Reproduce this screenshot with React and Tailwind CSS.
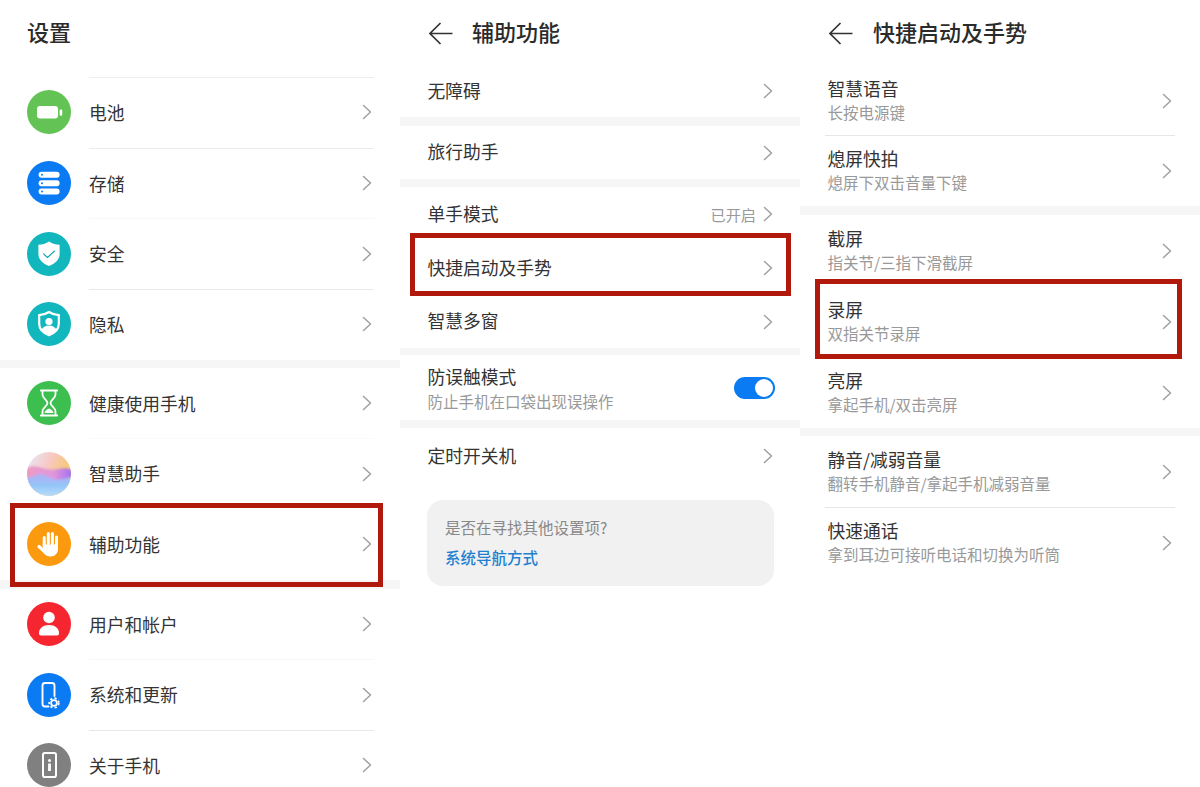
import React from 'react'

function Chevron() {
  return (
    <svg width="10" height="16" viewBox="0 0 10 16" fill="none" className="shrink-0">
      <path d="M1.5 1.5 8.5 8 1.5 14.5" stroke="#a0a0a0" strokeWidth="1.5" strokeLinecap="round" strokeLinejoin="round" />
    </svg>
  )
}

function BackArrow() {
  return (
    <svg width="24" height="23" viewBox="0 0 24 23" fill="none" className="shrink-0">
      <path d="M23.5 11.5H1.5M11.5 1 1 11.5 11.5 22" stroke="#333333" strokeWidth="1.7" />
    </svg>
  )
}

function Circle({ color, children }) {
  return (
    <svg width="44" height="44" viewBox="0 0 44 44" fill="none" className="shrink-0">
      <circle cx="22" cy="22" r="22" fill={color} />
      {children}
    </svg>
  )
}

const BatteryIcon = () => (
  <Circle color="#63c354">
    <rect x="10" y="16" width="21" height="12.6" rx="3" fill="#fff" />
    <rect x="32.6" y="19.4" width="2.6" height="6.4" rx="1" fill="#fff" />
  </Circle>
)

const StorageIcon = () => (
  <Circle color="#0a7bf3">
    <rect x="11.6" y="10.8" width="21" height="6" rx="3" fill="#fff" />
    <rect x="11.6" y="19.2" width="21" height="6" rx="3" fill="#fff" />
    <rect x="11.6" y="27.6" width="21" height="6" rx="3" fill="#fff" />
    <circle cx="15" cy="13.8" r="1" fill="#0a7bf3" />
    <circle cx="15" cy="22.2" r="1" fill="#0a7bf3" />
    <circle cx="15" cy="30.6" r="1" fill="#0a7bf3" />
  </Circle>
)

const SecurityIcon = () => (
  <Circle color="#12b6bd">
    <path d="M22 9.400c2.600 1.800 6 3 10.600 3.400v9.200c0 5.600-4.400 9.600-10.600 12-6.200-2.400-10.600-6.400-10.600-12v-9.200C16 12.400 19.400 11.200 22 9.400Z" fill="#fff" />
    <path d="M16.500 21.800l4 3.700 7-6.500" stroke="#12a5ac" strokeWidth="1.100" strokeLinecap="round" strokeLinejoin="round" />
  </Circle>
)

const PrivacyIcon = () => (
  <Circle color="#12b6bd">
    <path d="M22 10c2.600 1.700 5.800 2.800 9.800 3.200v8.600c0 5.400-4 9.200-9.800 11.400-5.800-2.200-9.800-6-9.800-11.400v-8.600C16.200 12.800 19.400 11.700 22 10Z" stroke="#fff" strokeWidth="2.200" />
    <circle cx="22" cy="19.500" r="3.600" fill="#fff" />
    <path d="M14.500 28c1.200-3 4-4.500 7.500-4.500s6.300 1.500 7.500 4.500c-2 2.500-4.500 4-7.500 5.200-3-1.200-5.500-2.700-7.500-5.200Z" fill="#fff" />
  </Circle>
)

const HourglassIcon = () => (
  <Circle color="#3dbf4f">
    <path d="M14 9.500h16M14 34.500h16" stroke="#fff" strokeWidth="2.200" strokeLinecap="round" />
    <path d="M15.500 9.500v4c0 4 5 5.500 5 8.500s-5 4.500-5 8.500v4M28.500 9.500v4c0 4-5 5.500-5 8.500s5 4.500 5 8.500v4" stroke="#fff" strokeWidth="1.800" />
    <path d="M17.500 32c0-2 2.500-3.500 4.500-4.500 2 1 4.500 2.500 4.500 4.500Z" fill="#fff" />
  </Circle>
)

const AssistantIcon = () => (
  <svg width="44" height="44" viewBox="0 0 44 44" fill="none" className="shrink-0">
    <defs>
      <linearGradient id="assistTop" x1="0.100" y1="0.100" x2="0.850" y2="0.450">
        <stop offset="0" stopColor="#e9e3f0" />
        <stop offset="0.500" stopColor="#f7c9c4" />
        <stop offset="1" stopColor="#f8c878" />
      </linearGradient>
      <linearGradient id="assistMid" x1="0" y1="0" x2="1" y2="0">
        <stop offset="0" stopColor="#f09cc0" />
        <stop offset="0.600" stopColor="#df96dc" />
        <stop offset="1" stopColor="#9d6ef0" />
      </linearGradient>
      <linearGradient id="assistLow" x1="0" y1="0" x2="0" y2="1">
        <stop offset="0" stopColor="#b3aef4" />
        <stop offset="0.450" stopColor="#93c6f8" />
        <stop offset="1" stopColor="#c8e6f8" />
      </linearGradient>
      <filter id="assistSoft" x="-10%" y="-10%" width="120%" height="120%">
        <feGaussianBlur stdDeviation="0.900" />
      </filter>
      <clipPath id="assistClip">
        <circle cx="22" cy="22" r="22" />
      </clipPath>
    </defs>
    <g clipPath="url(#assistClip)">
      <rect width="44" height="44" fill="url(#assistTop)" />
      <g filter="url(#assistSoft)">
        <path d="M-2 17c6-4 11-3 17-1s11 2 16 1 9-1 15 1v20H-2Z" fill="url(#assistMid)" />
        <path d="M-2 25c5 2 9-2 14-3s9 3 14 5 12 0 20-3v24H-2Z" fill="url(#assistLow)" />
      </g>
    </g>
  </svg>
)

const HandIcon = () => (
  <Circle color="#fb9a0e">
    <path d="M17.200 24V15.500M21.300 24V11.500M25.400 24V11.500M29.500 25V15" stroke="#fff" strokeWidth="3" strokeLinecap="round" />
    <path d="M15.700 22.500H31V27c0 4.300-3 7.500-7.500 7.500-3.400 0-5.300-1.300-7.200-3.700Z" fill="#fff" />
    <path d="M18.500 30.500 12 24.500" stroke="#fff" strokeWidth="3.200" strokeLinecap="round" />
  </Circle>
)

const UserIcon = () => (
  <Circle color="#f5262f">
    <circle cx="22" cy="15.500" r="5.800" fill="#fff" />
    <path d="M12 31.500c0-5.500 4-8.500 10-8.500s10 3 10 8.500c0 1.300-.8 2-2 2H14c-1.200 0-2-.7-2-2Z" fill="#fff" />
  </Circle>
)

const UpdateIcon = () => (
  <Circle color="#0a7bf3">
    <path d="M21.500 33.500H18a2.500 2.500 0 0 1-2.500-2.500V12.500A2.500 2.500 0 0 1 18 10h7a2.500 2.500 0 0 1 2.500 2.500V23" stroke="#fff" strokeWidth="1.900" strokeLinecap="round" />
    <circle cx="27" cy="30" r="2.900" stroke="#fff" strokeWidth="1.800" />
    <circle cx="27" cy="30" r="4.800" stroke="#fff" strokeWidth="1.700" strokeDasharray="2.200 2.300" />
  </Circle>
)

const AboutIcon = () => (
  <Circle color="#808080">
    <rect x="16" y="10" width="13" height="24" rx="1.800" stroke="#fff" strokeWidth="2" />
    <circle cx="22.500" cy="17.500" r="1.500" fill="#fff" />
    <rect x="21.100" y="20.500" width="2.800" height="7.500" fill="#fff" />
  </Circle>
)

const mainGroups = [
  [
    { label: '电池', icon: BatteryIcon, line: 'border-[#eeeeee]' },
    { label: '存储', icon: StorageIcon, line: 'border-[#ebebeb]' },
    { label: '安全', icon: SecurityIcon, line: 'border-[#f8f8f8]' },
    { label: '隐私', icon: PrivacyIcon, line: 'border-[#e9e9e9]' },
  ],
  [
    { label: '健康使用手机', icon: HourglassIcon, line: 'border-transparent' },
    { label: '智慧助手', icon: AssistantIcon, line: 'border-[#fafafa]' },
    { label: '辅助功能', icon: HandIcon, line: 'border-transparent', marked: true },
  ],
  [
    { label: '用户和帐户', icon: UserIcon, line: 'border-transparent' },
    { label: '系统和更新', icon: UpdateIcon, line: 'border-[#f8f8f8]' },
    { label: '关于手机', icon: AboutIcon, line: 'border-[#e8e8e8]' },
  ],
]

const gestureGroups = [
  [
    { title: '智慧语音', sub: '长按电源键', height: 'h-[70px]' },
    { title: '熄屏快拍', sub: '熄屏下双击音量下键', line: true },
  ],
  [
    { title: '截屏', sub: '指关节/三指下滑截屏' },
    { title: '录屏', sub: '双指关节录屏', marked: true },
    { title: '亮屏', sub: '拿起手机/双击亮屏' },
  ],
  [
    { title: '静音/减弱音量', sub: '翻转手机静音/拿起手机减弱音量' },
    { title: '快速通话', sub: '拿到耳边可接听电话和切换为听筒', line: true },
  ],
]

function SettingsColumn() {
  return (
    <div className="h-[787px] overflow-hidden">
      <div className="h-[77px] pl-[27px] pt-[15px] text-[22px] leading-[32px] font-medium text-[#2b2b2b]">设置</div>
      {mainGroups.map((group, i) => (
        <div key={i}>
          {i > 0 && <div className={i === 2 ? 'h-[9px] bg-[#f6f6f6]' : 'h-2 bg-[#f6f6f6]'} />}
          {group.map((item) => {
            const Icon = item.icon
            return (
              <div key={item.label} className="relative flex h-[70.67px] items-center pl-[27px] pr-[26px]">
                <Icon />
                <div className={`ml-[18px] flex h-full flex-1 items-center justify-between border-t pb-[1px] pr-[2px] ${item.line}`}>
                  <span className="text-[17.750px] text-[#333333]">{item.label}</span>
                  <Chevron />
                </div>
                {item.marked && (
                  <div className="absolute left-[10px] right-[17px] -top-[6px] -bottom-[7px] z-10 border-[5px] border-[#b2190d]" />
                )}
              </div>
            )
          })}
        </div>
      ))}
    </div>
  )
}

function SimpleRow({ label, height, value, marked }) {
  return (
    <div className={`relative flex items-center justify-between pl-[27.500px] pr-[27px] ${height}`}>
      <span className="-translate-y-px text-[17.750px] text-[#333333]">{label}</span>
      <div className="flex items-center gap-[7px]">
        {value && <span className="text-[15.200px] text-[#999999]">{value}</span>}
        <Chevron />
      </div>
      {marked && (
        <div className="absolute left-[10px] right-[9px] -top-[8px] -bottom-[1px] z-10 border-[5px] border-[#b2190d]" />
      )}
    </div>
  )
}

function AccessibilityColumn() {
  return (
    <div className="h-[787px] overflow-hidden">
      <div className="flex h-[65px] items-start gap-[19px] pl-[29px] pt-[22px]">
        <BackArrow />
        <span className="-mt-[7px] text-[22px] leading-[32px] font-medium text-[#2b2b2b]">辅助功能</span>
      </div>
      <SimpleRow label="无障碍" height="h-[52px]" />
      <div className="h-[9px] bg-[#f6f6f6]" />
      <SimpleRow label="旅行助手" height="h-[53px]" />
      <div className="h-2 bg-[#f6f6f6]" />
      <SimpleRow label="单手模式" height="h-[54px]" value="已开启" />
      <SimpleRow label="快捷启动及手势" height="h-[54px]" marked />
      <SimpleRow label="智慧多窗" height="h-[53px]" />
      <div className="h-[7px] bg-[#f6f6f6]" />
      <div className="flex h-[65px] items-center justify-between pl-[27.500px] pr-[25px]">
        <div className="-translate-y-px mt-[3px]">
          <div className="text-[17.750px] leading-[24px] text-[#333333]">防误触模式</div>
          <div className="mt-[1px] text-[15.500px] leading-[24px] text-[#999999]">防止手机在口袋出现误操作</div>
        </div>
        <div className="flex h-[22px] w-[41px] items-center justify-end rounded-full bg-[#0a7bf3] pr-[2px]">
          <div className="size-[18px] rounded-full bg-white" />
        </div>
      </div>
      <div className="h-2 bg-[#f6f6f6]" />
      <SimpleRow label="定时开关机" height="h-[56px]" />
      <div className="ml-[27px] mr-[26px] mt-4 flex h-[86px] flex-col justify-center gap-[6px] rounded-2xl bg-[#f1f1f1] pb-[2px] pl-[18px]">
        <div className="text-[15.500px] leading-[24px] text-[#888888]">是否在寻找其他设置项?</div>
        <div className="text-[15.500px] leading-[24px] font-medium text-[#1f80d0]">系统导航方式</div>
      </div>
    </div>
  )
}

function GestureColumn() {
  return (
    <div className="h-[787px] overflow-hidden">
      <div className="flex h-[65px] items-start gap-[20px] pl-[29px] pt-[22px]">
        <BackArrow />
        <span className="-mt-[7px] text-[22px] leading-[32px] font-medium text-[#2b2b2b]">快捷启动及手势</span>
      </div>
      {gestureGroups.map((group, i) => (
        <div key={i}>
          {i > 0 && <div className={i === 1 ? 'h-[9px] bg-[#f6f6f6]' : 'h-2 bg-[#f6f6f6]'} />}
          {group.map((item) => (
            <div key={item.title} className={`relative px-[25px] ${item.height || 'h-[71px]'}`}>
              <div className={`flex h-full items-center justify-between border-t pl-[2.500px] pr-[3px] ${item.line ? 'border-[#e6e6e6]' : 'border-transparent'}`}>
                <div className="-translate-y-px">
                  <div className="text-[17.750px] leading-[24px] text-[#333333]">{item.title}</div>
                  <div className="text-[15.500px] leading-[24px] text-[#999999]">{item.sub}</div>
                </div>
                <Chevron />
              </div>
              {item.marked && (
                <div className="absolute left-[15px] right-[18px] -top-[7px] bottom-[-2px] z-10 border-[5px] border-[#b2190d]" />
              )}
            </div>
          ))}
        </div>
      ))}
    </div>
  )
}

export default function App() {
  return (
    <div className="grid h-[787px] w-[1200px] grid-cols-3 overflow-hidden bg-white font-['Noto_Sans_CJK_SC','Noto_Sans',sans-serif]">
      <SettingsColumn />
      <AccessibilityColumn />
      <GestureColumn />
    </div>
  )
}
